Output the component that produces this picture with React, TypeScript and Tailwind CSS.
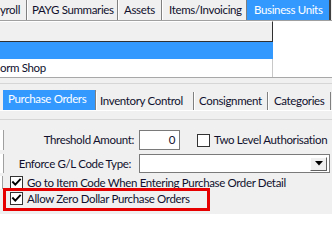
import React from "react";

function Check({ checked }: { checked: boolean }) {
  return (
    <div className="w-[13px] h-[13px] bg-white border border-[#333333] shrink-0 flex items-center justify-center">
      {checked && (
        <svg width="11" height="11" viewBox="0 0 11 11">
          <path d="M2 5.2 L4.3 7.6 L9 2.6" fill="none" stroke="#000" strokeWidth="1.9" strokeLinecap="square" />
        </svg>
      )}
    </div>
  );
}

export default function App() {
  return (
    <div className="w-[332px] h-[214px] overflow-hidden bg-[#f0f0f0] font-[Lato,sans-serif] text-[11.5px] tracking-[-0.35px] text-[#10102e] flex flex-col leading-none whitespace-nowrap">
      {/* top tab row */}
      <div className="h-[21px] flex items-stretch border-b border-[#a0a0a0] shrink-0">
        <div className="w-[27px] h-[20px] border-r border-[#808080] flex items-center justify-end pr-[6px]">yroll</div>
        <div className="w-[91px] h-[20px] border-l border-white border-r border-r-[#808080] flex items-center pl-[4px]">PAYG Summaries</div>
        <div className="w-[44px] h-[20px] border-l border-white border-r border-r-[#808080] flex items-center pl-[5px]">Assets</div>
        <div className="w-[85px] h-[20px] border-l border-white border-r border-r-[#808080] flex items-center pl-[6px]">Items/Invoicing</div>
        <div className="w-[84px] h-[20px] bg-[#3399ff] text-white border-r-2 border-[#404040] flex items-center pl-[7px]">Business Units</div>
      </div>

      {/* list view */}
      <div className="h-[57px] bg-white border-b border-[#a8a8a8] shrink-0 flex flex-col">
        <div className="w-[273px] h-[21px] bg-[#f0f0f0] border-t border-white border-r border-r-[#303030] border-b border-b-[#303030]" />
        <div className="w-[273px] h-[17px] bg-[#3399ff]" />
        <div className="w-[273px] h-[18px] border-r border-[#c8c8c8] flex items-center">orm Shop</div>
      </div>

      {/* gap + separator */}
      <div className="h-[6px] border-b border-[#d6d6d6] shrink-0" />

      {/* second tab row */}
      <div className="mt-[6px] h-[21px] flex items-end border-b border-white shrink-0">
        <div className="ml-[3px] w-[93px] h-[20px] bg-[#3399ff] text-white flex items-center pl-[5px] pb-[2px] border-r border-[#808080]">Purchase Orders</div>
        <div className="w-[98px] h-[18px] border-l border-white border-r border-r-[#808080] flex items-center pl-[3px]">Inventory Control</div>
        <div className="w-[74px] h-[18px] border-l border-white border-r border-r-[#808080] flex items-center pl-[4px]">Consignment</div>
        <div className="w-[63px] h-[18px] border-l border-white border-r border-r-[#808080] flex items-center pl-[5px]">Categories</div>
      </div>

      {/* panel */}
      <div className="mt-[8px] border-t border-[#d6d6d6] flex flex-col">
        {/* threshold row */}
        <div className="mt-[10px] h-[20px] flex items-center">
          <div className="w-[4px] h-[20px] bg-white border-r border-[#a0a0a0] shrink-0" />
          <div className="w-[130px] text-right shrink-0">Threshold Amount:</div>
          <div className="ml-[5px] w-[41px] h-[20px] bg-white border border-[#7a7a7a] flex items-center justify-end pr-[4px] shrink-0">0</div>
          <div className="ml-[17px]"><Check checked={false} /></div>
          <div className="ml-[4px]">Two Level Authorisation</div>
        </div>

        {/* enforce row */}
        <div className="mt-[4px] h-[19px] flex items-center">
          <div className="w-[4px] h-[19px] bg-white border-r border-[#a0a0a0] shrink-0" />
          <div className="w-[127px] text-right shrink-0">Enforce G/L Code Type:</div>
          <div className="ml-[8px] w-[191px] h-[19px] bg-white border border-[#7a7a7a] flex items-center justify-end pr-[2px] shrink-0">
            <div className="w-[17px] h-[14px] bg-[#f0f0f0] border border-t-white border-l-white border-r-[#606060] border-b-[#606060] flex items-center justify-center">
              <svg width="8" height="5" viewBox="0 0 8 5">
                <path d="M0 0 H8 L4 4.5 Z" fill="#000" />
              </svg>
            </div>
          </div>
        </div>

        {/* go to item row */}
        <div className="mt-[3px] h-[13px] flex items-center">
          <div className="w-[3px] h-[13px] bg-white border-r border-[#a0a0a0] shrink-0" />
          <div className="ml-[7px]"><Check checked={true} /></div>
          <div className="ml-[4px]">Go to Item Code When Entering Purchase Order Detail</div>
        </div>

        {/* highlighted row */}
        <div className="-mt-[1px] ml-[3px] w-[207px] h-[23px] border-[3px] border-[#e60000] flex items-start pt-[1px] pl-[4px]">
          <Check checked={true} />
          <div className="ml-[4px] mt-[1px]">Allow Zero Dollar Purchase Orders</div>
        </div>
      </div>
    </div>
  );
}
